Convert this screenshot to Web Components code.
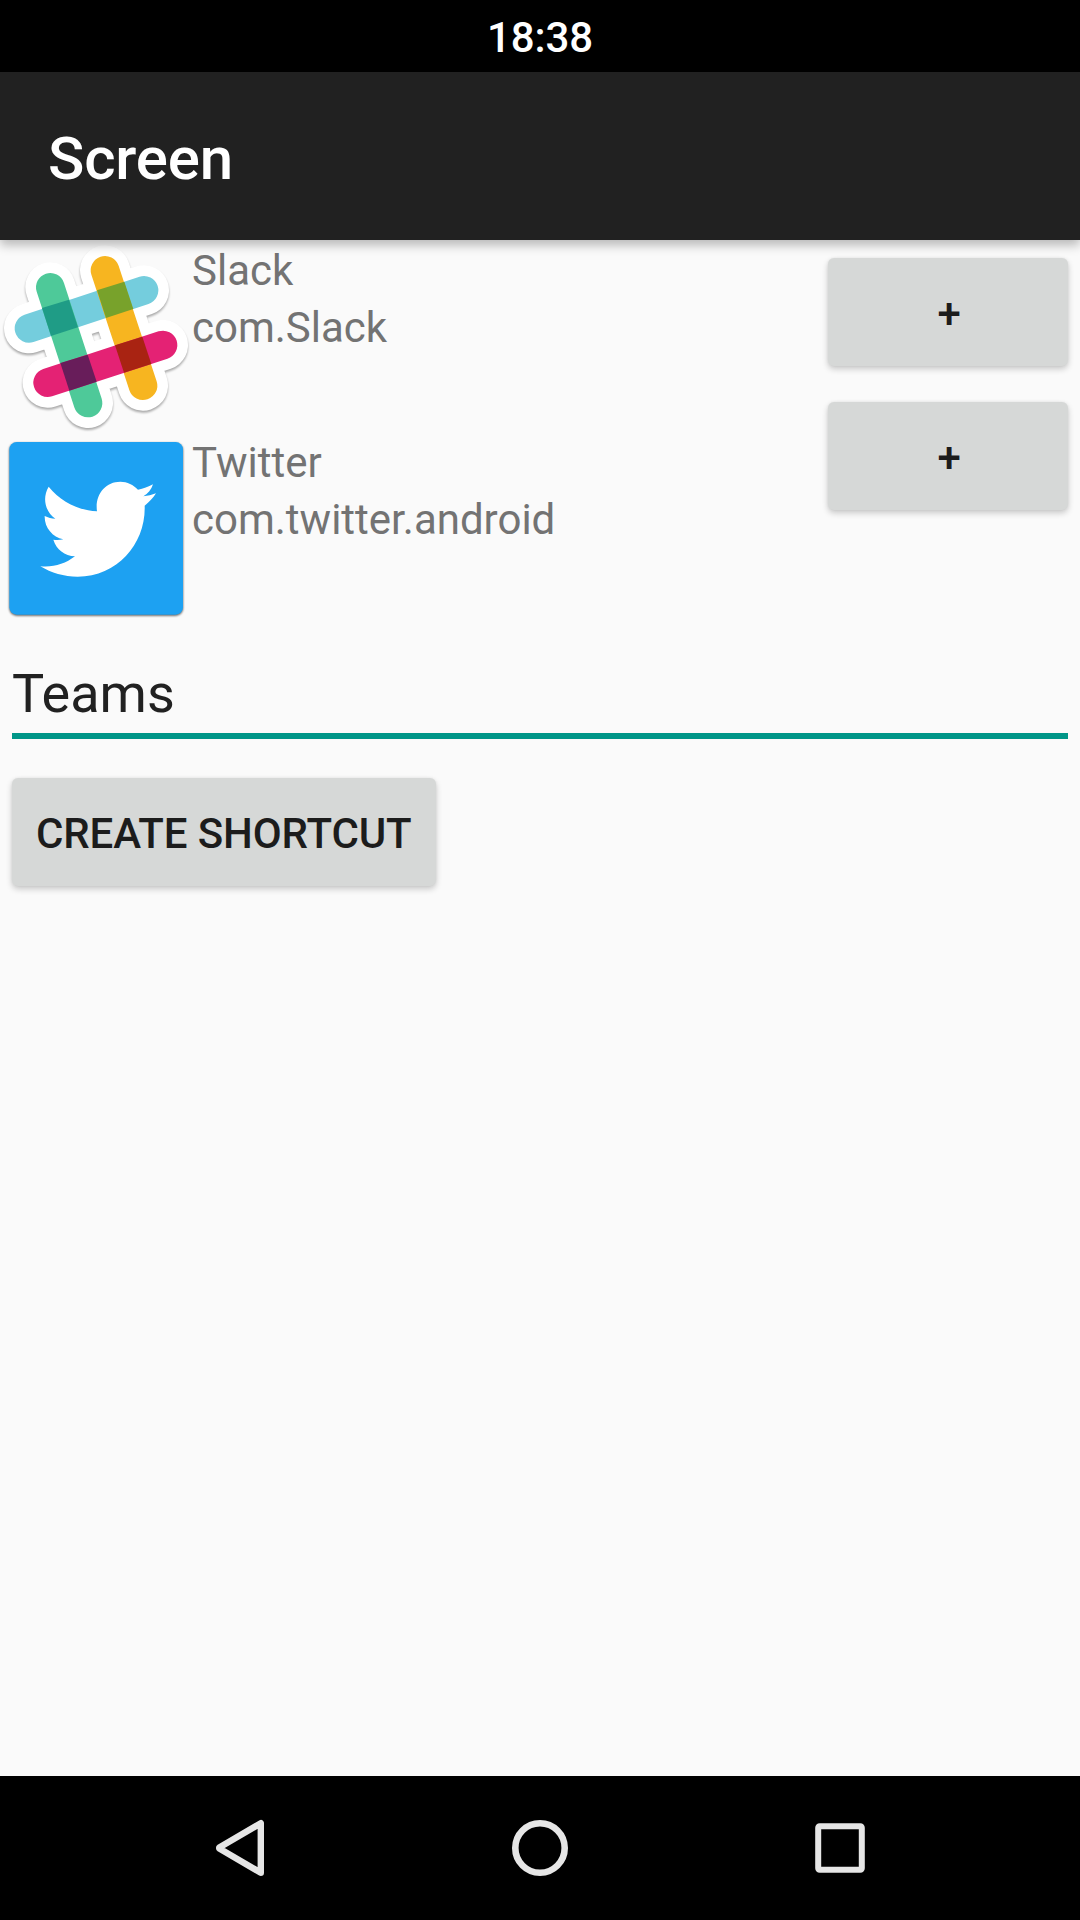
<!DOCTYPE html>
<html lang="en">
<head>
<meta charset="utf-8">
<title>Screen</title>
<style>
html, body { margin: 0; height: 100%; }
body { font-family: Roboto, "Noto Sans", sans-serif; background: #fafafa; overflow: hidden; }
</style>
</head>
<body>
<phone-screen>
  <status-bar slot="top">18:38</status-bar>
  <app-bar slot="top">Screen</app-bar>
  <app-row><slack-icon slot="icon"></slack-icon><span>Slack</span><span>com.Slack</span></app-row>
  <app-row><twitter-icon slot="icon"></twitter-icon><span>Twitter</span><span>com.twitter.android</span></app-row>
  <raised-button slot="actions" class="add">+</raised-button>
  <raised-button slot="actions" class="add">+</raised-button>
  <text-field slot="form">Teams</text-field>
  <raised-button slot="form">CREATE SHORTCUT</raised-button>
  <nav-bar slot="bottom"></nav-bar>
</phone-screen>
<script>
const define = (name, html) => customElements.define(name, class extends HTMLElement {
  constructor() {
    super();
    const t = document.createElement('template');
    t.innerHTML = html;
    this.attachShadow({ mode: 'open' }).append(t.content.cloneNode(true));
  }
});

define('phone-screen', `
<style>
:host { display: flex; flex-direction: column; width: 1080px; height: 1920px; background: #fafafa; }
header { position: relative; z-index: 1; }
main { flex: 1; display: flex; flex-direction: column; }
.lists { display: flex; height: 384px; }
.apps { flex: 1; display: flex; flex-direction: column; }
.actions { width: 264px; display: flex; flex-direction: column; }
.form { display: flex; flex-direction: column; align-items: flex-start; }
</style>
<header><slot name="top"></slot></header>
<main>
  <div class="lists"><div class="apps"><slot></slot></div><div class="actions"><slot name="actions"></slot></div></div>
  <div class="form"><slot name="form"></slot></div>
</main>
<slot name="bottom"></slot>`);

define('status-bar', `
<style>
:host { display: flex; justify-content: center; box-sizing: border-box; height: 72px; padding-top: 13px; background: #000; color: #fff; font-size: 42px; line-height: 49px; font-weight: 500; letter-spacing: -.1px; }
</style><slot></slot>`);

define('app-bar', `
<style>
:host { display: block; box-sizing: border-box; height: 168px; padding: 52px 48px 0; background: #212121; color: #fff; font-size: 60px; line-height: 70px; font-weight: 500; letter-spacing: -.15px; box-shadow: 0 5px 10px rgba(0,0,0,.27); }
</style><slot></slot>`);

define('app-row', `
<style>
:host { display: flex; height: 192px; color: #737373; font-size: 42px; line-height: 57px; }
.text { display: flex; flex-direction: column; padding-top: 2px; }
</style><slot name="icon"></slot><div class="text"><slot></slot></div>`);

define('raised-button', `
<style>
:host { display: flex; align-self: flex-start; box-sizing: border-box; height: 144px; padding: 18px 12px; }
:host(.add) { align-self: stretch; }
:host(.add) button { padding-left: 25px; padding-right: 23px; }
button { flex: 1; box-sizing: border-box; margin: 0; padding: 4px 24px 0; border: 0; border-radius: 6px; background: #d6d8d7; color: #1c1c1c; font: 500 42px/50px Roboto, sans-serif; letter-spacing: -.12px; white-space: nowrap; box-shadow: 0 3px 6px rgba(0,0,0,.2), 0 0 3px rgba(0,0,0,.06); }
</style><button><slot></slot></button>`);

define('text-field', `
<style>
:host { display: flex; align-self: stretch; box-sizing: border-box; height: 136px; padding: 0 12px 21px; }
div { flex: 1; box-sizing: border-box; padding-top: 38px; border-bottom: 6px solid #009688; color: #212121; font-size: 54px; line-height: 63px; }
</style><div><slot></slot></div>`);

define('slack-icon', `
<style>:host { display: block; width: 192px; height: 192px; } svg { display: block; overflow: visible; filter: drop-shadow(0 2px 1.3px rgba(0,0,0,.32)); }</style>
<svg width="192" height="192" viewBox="0 15 576 576" fill="none" stroke-linecap="round">
  <g stroke="#fff" stroke-width="150"><path d="M151 157L264 504M315 106L429 452M87 280L432 166M143 443L489 330"/></g>
  <g stroke-width="86">
    <path stroke="#74cddd" d="M87 280L432 166"/><path stroke="#4ec999" d="M151 157L264 504"/>
    <path stroke="#f7b520" d="M315 106L429 452"/><path stroke="#e42274" d="M143 443L489 330"/>
  </g>
  <path fill="#1f9c86" d="M126 219L207 194L234 277L153 303Z"/>
  <path fill="#78a22b" d="M291 166L373 140L400 222L318 249Z"/>
  <path fill="#681d5a" d="M181 384L263 359L290 440L208 467Z"/>
  <path fill="#a92312" d="M345 331L427 305L454 387L372 413Z"/>
</svg>`);

define('twitter-icon', `
<style>:host { display: block; width: 192px; height: 192px; } svg { display: block; } rect { filter: drop-shadow(0 3px 3px rgba(0,0,0,.65)); }</style>
<svg width="192" height="192" viewBox="0 6 576 576">
  <rect x="28" y="36" width="521" height="518" rx="22" fill="#1da1f2"/>
  <path fill="#fff" d="M146 170C181 213 234 241 291 244C284 195 315 155 361 155C382 155 400 164 414 179C430 176 445 170 459 163C454 179 444 191 430 199C443 198 456 194 468 190C459 204 448 216 434 227C438 338 354 440 233 440C192 440 154 429 121 409C160 413 195 402 225 379C194 378 169 358 160 329C170 331 181 330 190 328C157 321 133 292 134 258C144 263 155 266 166 266C135 245 126 203 146 170Z"/>
</svg>`);

define('nav-bar', `
<style>
:host { display: flex; box-sizing: border-box; height: 144px; padding: 0 90px; background: #000; }
div { flex: 1; display: flex; align-items: center; justify-content: center; }
svg { display: block; fill: none; stroke: #e6e6e6; stroke-width: 6; stroke-linejoin: round; }
</style>
<div><svg width="60" height="60"><path stroke-width="6.4" d="M50.8 5.2V54.8L9.7 30.8Q8.5 30 9.7 29.2Z"/></svg></div>
<div><svg width="60" height="60"><circle cx="30" cy="30" r="24.7" stroke-width="6.6"/></svg></div>
<div><svg width="60" height="60"><rect x="8.2" y="8.2" width="43.6" height="43.6" rx="1.5"/></svg></div>`);
</script>
</body>
</html>
